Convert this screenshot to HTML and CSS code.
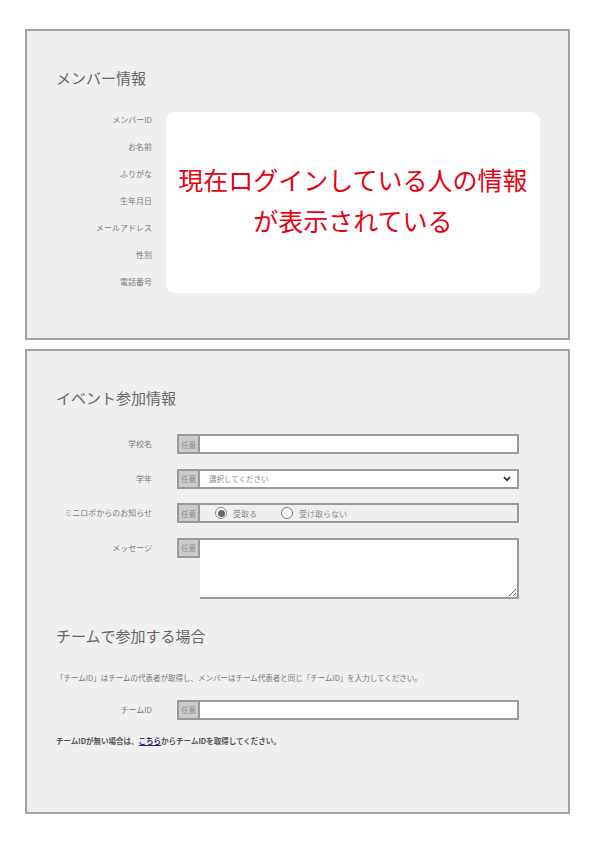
FILE: index.html
```html
<!DOCTYPE html>
<html lang="ja">
<head>
    <meta charset="UTF-8">
    <title>イベント参加登録</title>
    <link rel="stylesheet" href="styles.css">
</head>
<body>
    <div class="page">
        <!-- メンバー情報 -->
        <section class="card card-member">
            <h2 class="card-title">メンバー情報</h2>
            <div class="member">
                <ul class="member-labels">
                    <li>メンバーID</li>
                    <li>お名前</li>
                    <li>ふりがな</li>
                    <li>生年月日</li>
                    <li>メールアドレス</li>
                    <li>性別</li>
                    <li>電話番号</li>
                </ul>
                <div class="member-panel">
                    <p>現在ログインしている人の情報<br>が表示されている</p>
                </div>
            </div>
        </section>

        <!-- イベント参加情報 -->
        <section class="card card-event">
            <h2 class="card-title">イベント参加情報</h2>
            <div class="form">
                <div class="form-row">
                    <label class="form-label">学校名</label>
                    <div class="field">
                        <span class="badge">任意</span>
                        <input type="text" class="text-input">
                    </div>
                </div>
                <div class="form-row">
                    <label class="form-label">学年</label>
                    <div class="field">
                        <span class="badge">任意</span>
                        <div class="select-box">
                            <span>選択してください</span>
                            <svg width="8" height="6" viewBox="0 0 8 6"><path d="M1 1.2 L4 4.2 L7 1.2" fill="none" stroke="#333" stroke-width="1.8"/></svg>
                        </div>
                    </div>
                </div>
                <div class="form-row">
                    <label class="form-label">ミニロボからのお知らせ</label>
                    <div class="field">
                        <span class="badge">任意</span>
                        <div class="radio-box">
                            <span class="radio checked"></span>
                            <span class="radio-text">受取る</span>
                            <span class="radio"></span>
                            <span class="radio-text">受け取らない</span>
                        </div>
                    </div>
                </div>
                <div class="form-row">
                    <label class="form-label">メッセージ</label>
                    <div class="field">
                        <span class="badge">任意</span>
                        <textarea class="textarea"></textarea>
                    </div>
                </div>
            </div>

            <h2 class="card-title team-title">チームで参加する場合</h2>
            <p class="note">「チームID」はチームの代表者が取得し、メンバーはチーム代表者と同じ「チームID」を入力してください。</p>
            <div class="form-row">
                <label class="form-label">チームID</label>
                <div class="field">
                    <span class="badge">任意</span>
                    <input type="text" class="text-input">
                </div>
            </div>
            <p class="team-link">チームIDが無い場合は、<a href="#">こちら</a>からチームIDを取得してください。</p>
        </section>
    </div>
</body>
</html>
```

FILE: styles.css
```css
body {
    margin: 0;
    background: #fff;
    font-family: "Noto Sans CJK JP", "Noto Sans", sans-serif;
}

.page {
    padding: 29px 25px;
    display: flex;
    flex-direction: column;
    gap: 9px;
}

.card {
    background: #efefef;
    border: 2px solid #a2a2a2;
    padding: 36px 28px 45px 29px;
}

.card-title {
    margin: 0 0 23px;
    font-size: 15px;
    line-height: 22px;
    font-weight: normal;
    color: #666;
}

/* メンバー情報 */
.member {
    display: flex;
    gap: 14px;
}

.member-labels {
    list-style: none;
    margin: 0;
    padding: 0;
    width: 96px;
    display: flex;
    flex-direction: column;
    gap: 11px;
    text-align: right;
}

.member-labels li {
    font-size: 8px;
    line-height: 16px;
    color: #7a7a7a;
}

.member-panel {
    flex: 1;
    min-height: 181px;
    background: #fff;
    border-radius: 9px;
    display: flex;
    align-items: center;
    justify-content: center;
}

.member-panel p {
    margin: 0 0 6px;
    text-align: center;
    font-size: 25px;
    line-height: 41px;
    color: #e50012;
}

/* イベント参加情報 */
.card-event {
    padding-bottom: 65px;
}

.card-event > .card-title {
    margin-bottom: 25px;
}

.form {
    display: flex;
    flex-direction: column;
    gap: 14.5px;
}

.form-row {
    display: flex;
    align-items: flex-start;
    gap: 25px;
}

.form-label {
    width: 96px;
    text-align: right;
    font-size: 8px;
    line-height: 20px;
    color: #7a7a7a;
}

.field {
    width: 342px;
    display: flex;
    align-items: flex-start;
}

.badge {
    box-sizing: border-box;
    width: 23px;
    height: 20px;
    border: 2px solid #9a9a9a;
    background: #cacaca;
    color: #8a8a8a;
    font-size: 7.5px;
    display: flex;
    align-items: center;
    justify-content: center;
}

.text-input,
.select-box,
.radio-box,
.textarea {
    box-sizing: border-box;
    flex: 1;
    height: 20px;
    margin: 0;
    border: 2px solid #9a9a9a;
    border-left: none;
    background: #fff;
    font-family: inherit;
    font-size: 8px;
    color: #888;
}

.select-box {
    display: flex;
    align-items: center;
    justify-content: space-between;
    padding: 0 6px 0 9px;
}

.select-box span {
    font-size: 7.5px;
}

.radio-box {
    background: #efefef;
    display: flex;
    align-items: center;
    padding-left: 15px;
}

.radio {
    box-sizing: border-box;
    width: 12px;
    height: 12px;
    border: 1px solid #777;
    border-radius: 50%;
    background: #fff;
    display: flex;
    align-items: center;
    justify-content: center;
}

.radio.checked {
    border: 1.5px solid #888;
}

.radio.checked::after {
    content: "";
    width: 7px;
    height: 7px;
    border-radius: 50%;
    background: #666;
}

.radio-text {
    margin: 0 24px 0 6px;
    font-size: 8px;
    color: #888;
}

.textarea {
    height: 61px;
    min-height: 61px;
    resize: vertical;
}

/* チームで参加する場合 */
.team-title {
    margin-top: 26px;
    margin-bottom: 26px;
}

.note {
    margin: 0 0 16px;
    font-size: 7.5px;
    line-height: 12px;
    color: #777;
}

.team-link {
    margin: 15px 0 0;
    font-size: 7.5px;
    line-height: 12px;
    font-weight: bold;
    color: #555;
}

.team-link a {
    color: #1f2a7a;
}
```
